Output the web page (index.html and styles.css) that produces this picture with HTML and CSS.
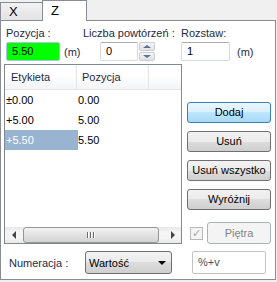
FILE: index.html
```html
<!DOCTYPE html>
<html lang="pl">
<head>
    <meta charset="UTF-8">
    <title>Osie Z</title>
    <link rel="stylesheet" href="styles.css">
</head>
<body>
    <div class="tabs">
        <div class="tab">X</div>
        <div class="tab active">Z</div>
    </div>
    <div class="panel">
        <div class="fields">
            <div class="field f-pos">
                <div class="label">Pozycja :</div>
                <div class="line">
                    <div class="txt green w-pos">5.50</div>
                    <span class="unit">(m)</span>
                </div>
            </div>
            <div class="field f-cnt">
                <div class="label">Liczba powtórzeń :</div>
                <div class="line ind">
                    <div class="txt w-cnt">0</div>
                    <div class="spin">
                        <div class="spin-btn"><span class="tri-up"></span></div>
                        <div class="spin-btn"><span class="tri-down"></span></div>
                    </div>
                </div>
            </div>
            <div class="field f-step">
                <div class="label">Rozstaw:</div>
                <div class="line">
                    <div class="txt w-step">1</div>
                    <span class="unit u-step">(m)</span>
                </div>
            </div>
        </div>

        <div class="middle">
            <div class="list">
                <div class="head">
                    <div class="col c1">Etykieta</div>
                    <div class="col c2">Pozycja</div>
                    <div class="col c3"></div>
                </div>
                <div class="rows">
                    <div class="row"><div class="cell c1">±0.00</div><div class="cell c2">0.00</div></div>
                    <div class="row"><div class="cell c1">+5.00</div><div class="cell c2">5.00</div></div>
                    <div class="row"><div class="cell c1 sel">+5.50</div><div class="cell c2">5.50</div></div>
                </div>
                <div class="hscroll">
                    <div class="arrow"><span class="tri-left"></span></div>
                    <div class="thumb"><span class="grip"></span><span class="grip"></span><span class="grip"></span></div>
                    <div class="track"></div>
                    <div class="arrow"><span class="tri-right"></span></div>
                </div>
            </div>

            <div class="side">
                <div class="btn default">Dodaj</div>
                <div class="btn">Usuń</div>
                <div class="btn">Usuń wszystko</div>
                <div class="btn">Wyróżnij</div>
                <div class="floor">
                    <div class="check">&#10003;</div>
                    <div class="btn disabled">Piętra</div>
                </div>
            </div>
        </div>

        <div class="bottom">
            <div class="label num">Numeracja :</div>
            <div class="combo">
                <span>Wartość</span>
                <span class="tri-down big"></span>
            </div>
            <div class="txt fmt">%+v</div>
        </div>
    </div>
</body>
</html>
```

FILE: styles.css
```css
body {
    margin: 0;
    width: 277px;
    height: 282px;
    background-color: #f0f0f0;
    font-family: 'Liberation Sans', Arial, sans-serif;
    font-size: 11px;
    color: #000;
    overflow: hidden;
}

/* tabs */
.tabs {
    display: flex;
    align-items: flex-end;
    height: 20px;
}

.tab {
    box-sizing: border-box;
    height: 18px;
    width: 43px;
    padding-left: 8px;
    line-height: 17px;
    font-size: 13px;
    border: 1px solid #898c95;
    border-bottom: none;
    background: linear-gradient(#f2f2f2, #e3e3e3);
}

.tab.active {
    position: relative;
    height: 21px;
    width: 45px;
    margin-bottom: -1px;
    margin-left: -1px;
    line-height: 19px;
    background: #fff;
}

/* panel */
.panel {
    box-sizing: border-box;
    width: 276px;
    height: 260px;
    border: 1px solid #898c95;
    background: #fff;
    padding: 5px 0 0 3px;
}

.label {
    height: 14px;
    line-height: 14px;
    white-space: nowrap;
    color: #1e2a44;
}

.fields {
    display: flex;
    padding-left: 2px;
}

.field .label {
    margin-bottom: 2px;
}

.f-pos { width: 77px; }
.f-cnt { width: 98px; }

.line {
    display: flex;
    align-items: center;
}

.line.ind {
    padding-left: 17px;
}

.txt {
    box-sizing: border-box;
    height: 19px;
    line-height: 17px;
    padding-left: 5px;
    border: 1px solid #d5d9e1;
    border-top-color: #abadb3;
    background: #fff;
    border-radius: 2px;
}

.txt.green {
    background: #00ff00;
    border-color: #a9c5e6;
}

.w-pos { width: 54px; }
.w-cnt { width: 38px; }
.w-step { width: 49px; }

.unit {
    margin-left: 4px;
    color: #1e2a44;
}

.u-step {
    margin-left: 7px;
}

.spin {
    display: flex;
    flex-direction: column;
    gap: 1px;
    margin-left: 1px;
}

.spin-btn {
    box-sizing: border-box;
    width: 16px;
    height: 9px;
    border: 1px solid #c9ccd2;
    border-radius: 2px;
    background: linear-gradient(#f5f5f5, #e2e2e2);
    display: flex;
    align-items: center;
    justify-content: center;
}

.tri-up {
    border-left: 4px solid transparent;
    border-right: 4px solid transparent;
    border-bottom: 3px solid #56709a;
}

.tri-down {
    border-left: 4px solid transparent;
    border-right: 4px solid transparent;
    border-top: 3px solid #56709a;
}

/* list + side buttons */
.middle {
    display: flex;
    margin-top: 3px;
}

.list {
    box-sizing: border-box;
    width: 178px;
    height: 180px;
    border: 1px solid #828790;
    display: flex;
    flex-direction: column;
}

.head {
    display: flex;
    height: 24px;
    border-bottom: 1px solid #e5e5e5;
    background: linear-gradient(#fff 40%, #f3f4f6);
}

.col {
    box-sizing: border-box;
    line-height: 24px;
    border-right: 1px solid #e3e4e6;
    color: #1e2a44;
}

.head .c1 { width: 72px; padding-left: 6px; }
.head .c2 { width: 72px; padding-left: 5px; }
.head .c3 { flex: 1; border-right: none; }

.rows {
    flex: 1;
}

.row {
    display: flex;
    height: 20px;
    line-height: 20px;
}

.cell.c1 {
    width: 72px;
    padding-left: 1px;
}

.cell.sel {
    background: #99b4d1;
    color: #fff;
}

.hscroll {
    display: flex;
    height: 16px;
    background: linear-gradient(#e8e8e8, #f4f4f4 30%, #f4f4f4 70%, #e8e8e8);
}

.arrow {
    width: 17px;
    display: flex;
    align-items: center;
    justify-content: center;
}

.tri-left {
    border-top: 4px solid transparent;
    border-bottom: 4px solid transparent;
    border-right: 4px solid #444;
}

.tri-right {
    border-top: 4px solid transparent;
    border-bottom: 4px solid transparent;
    border-left: 4px solid #444;
}

.thumb {
    box-sizing: border-box;
    width: 136px;
    margin: 0 0 0 1px;
    border: 1px solid #979797;
    border-radius: 3px;
    background: linear-gradient(#f3f3f3, #e2e2e2 50%, #d3d3d3);
    display: flex;
    align-items: center;
    justify-content: center;
    gap: 1px;
}

.grip {
    width: 1px;
    height: 6px;
    background: #6b6b6b;
    border-right: 1px solid #fff;
}

.track {
    flex: 1;
}

.side {
    display: flex;
    flex-direction: column;
    margin-left: 5px;
    padding-top: 38px;
    gap: 8px;
}

.btn {
    box-sizing: border-box;
    width: 84px;
    height: 21px;
    line-height: 19px;
    text-align: center;
    white-space: nowrap;
    border: 1px solid #707070;
    border-radius: 3px;
    background: linear-gradient(#f2f2f2, #ebebeb 50%, #dddddd 50%, #cfcfcf);
}

.btn.default {
    border-color: #3c7fb1;
    background: linear-gradient(#eaf6fd, #d9f0fc 50%, #bee6fd 50%, #a7d9f5);
}

.floor {
    display: flex;
    align-items: center;
    margin-top: 4px;
}

.check {
    box-sizing: border-box;
    width: 13px;
    height: 13px;
    margin-left: 3px;
    border: 1px solid #b9b9b9;
    background: #f4f4f4;
    color: #a8a8a8;
    font-size: 11px;
    line-height: 11px;
    text-align: center;
}

.btn.disabled {
    width: 64px;
    height: 22px;
    line-height: 20px;
    margin-left: 4px;
    border-color: #adb2b5;
    background: #f4f4f4;
    color: #838383;
}

/* bottom row */
.bottom {
    display: flex;
    align-items: center;
    margin-top: 7px;
    padding-left: 5px;
}

.label.num {
    width: 76px;
}

.combo {
    box-sizing: border-box;
    width: 87px;
    height: 23px;
    padding: 0 5px 0 3px;
    border: 1px solid #707070;
    border-radius: 3px;
    background: linear-gradient(#f2f2f2, #ebebeb 50%, #dddddd 50%, #cfcfcf);
    display: flex;
    align-items: center;
    justify-content: space-between;
}

.tri-down.big {
    border-left-width: 4px;
    border-right-width: 4px;
    border-top: 4px solid #000;
}

.txt.fmt {
    width: 74px;
    height: 23px;
    line-height: 21px;
    margin-left: 20px;
    border-color: #c4c4c4;
    color: #4a5262;
}
```
